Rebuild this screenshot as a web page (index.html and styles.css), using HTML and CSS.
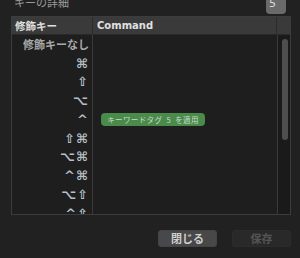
FILE: index.html
```html
<!DOCTYPE html>
<html>
<head>
    <title>キーの詳細</title>
    <link rel="stylesheet" href="styles.css">
</head>
<body>
    <div class="panel">
        <div class="title-bar">
            <span class="title">キーの詳細</span>
            <span class="badge">5</span>
        </div>

        <div class="table">
            <div class="head head-mod">修飾キー</div>
            <div class="head head-cmd">Command</div>
            <div class="head head-end"></div>

            <div class="col-mod">
                <div class="row">修飾キーなし</div>
                <div class="row sym">⌘</div>
                <div class="row sym">⇧</div>
                <div class="row sym">⌥</div>
                <div class="row sym">^</div>
                <div class="row sym">⇧⌘</div>
                <div class="row sym">⌥⌘</div>
                <div class="row sym">^⌘</div>
                <div class="row sym">⌥⇧</div>
                <div class="row sym">^⇧</div>
            </div>
            <div class="col-cmd">
                <div class="row"></div>
                <div class="row"></div>
                <div class="row"></div>
                <div class="row"></div>
                <div class="row"><span class="pill">キーワードタグ 5 を適用</span></div>
                <div class="row"></div>
                <div class="row"></div>
                <div class="row"></div>
                <div class="row"></div>
            </div>
            <div class="scroll-track">
                <div class="scroll-thumb"></div>
            </div>
        </div>

        <div class="actions">
            <button class="btn">閉じる</button>
            <button class="btn btn-disabled">保存</button>
        </div>
    </div>
</body>
</html>
```

FILE: styles.css
```css
body {
    margin: 0;
    background-color: #212121;
    font-family: "Noto Sans CJK JP", "DejaVu Sans", sans-serif;
    color: #cccccc;
    overflow: hidden;
}
.panel {
    width: 300px;
    height: 258px;
}
.title-bar {
    height: 16px;
    display: flex;
    justify-content: space-between;
    align-items: flex-start;
    padding: 0 14px 0 14px;
    box-sizing: border-box;
    overflow: hidden;
}
.title {
    font-size: 11px;
    line-height: 11px;
    margin-top: -3px;
    color: #9a9a9a;
}
.badge {
    width: 20px;
    height: 18px;
    margin-top: -4px;
    border-radius: 4px;
    background-color: #6a6a6a;
    color: #d8d8d8;
    font-family: "DejaVu Sans", sans-serif;
    font-size: 11px;
    line-height: 16px;
    padding-left: 3px;
    box-sizing: border-box;
}
.table {
    margin: 0 9px 0 11px;
    height: 197px;
    border: 1px solid #3c3c3c;
    background-color: #1e1e1e;
    display: grid;
    grid-template-columns: 81px 1fr 13px;
    grid-template-rows: 18px 1fr;
    overflow: hidden;
}
.head {
    background-color: #3a3a3a;
    border-bottom: 1px solid #2a2a2a;
    font-size: 10.5px;
    line-height: 18px;
    color: #e0e0e0;
    font-weight: bold;
}
.head-mod {
    padding-left: 3px;
    border-right: 1px solid #2c2c2c;
}
.head-cmd {
    padding-left: 4px;
    font-family: "DejaVu Sans", sans-serif;
    font-size: 10px;
    border-right: 1px solid #2c2c2c;
}
.col-mod {
    border-right: 1px solid #3a3a3a;
    overflow: hidden;
}
.col-cmd {
    overflow: hidden;
}
.row {
    height: 18.75px;
    display: flex;
    align-items: center;
    justify-content: flex-end;
    padding-right: 3px;
    font-size: 11px;
    color: #a8a8a8;
    font-weight: bold;
    white-space: nowrap;
}
.sym {
    font-family: "DejaVu Sans", sans-serif;
    color: #b6bec6;
    font-size: 13px;
    letter-spacing: 1px;
}
.col-cmd .row {
    justify-content: flex-start;
    padding-left: 8px;
}
.pill {
    height: 13px;
    width: 104px;
    border-radius: 4px;
    background-color: #4a8a4a;
    color: #c8dcc8;
    font-size: 7.5px;
    font-weight: normal;
    letter-spacing: 0.4px;
    word-spacing: 2px;
    line-height: 13px;
    text-align: center;
}
.scroll-track {
    border-left: 1px solid #3a3a3a;
    background-color: #1a1a1a;
}
.scroll-thumb {
    margin: 4px 0 0 4px;
    width: 6px;
    height: 101px;
    border-radius: 3px;
    background-color: #4e4e4e;
}
.actions {
    display: flex;
    justify-content: flex-end;
    gap: 15px;
    margin: 15px 9px 0 0;
}
.btn {
    width: 59px;
    height: 17px;
    border: 1px solid #444;
    border-radius: 3px;
    background-color: #484848;
    color: #cfcfcf;
    font-family: "Noto Sans CJK JP", sans-serif;
    font-size: 11px;
    font-weight: bold;
    padding: 0;
    line-height: 15px;
}
.btn-disabled {
    background-color: #292929;
    border-color: #2c2c2c;
    color: #555555;
}
```
